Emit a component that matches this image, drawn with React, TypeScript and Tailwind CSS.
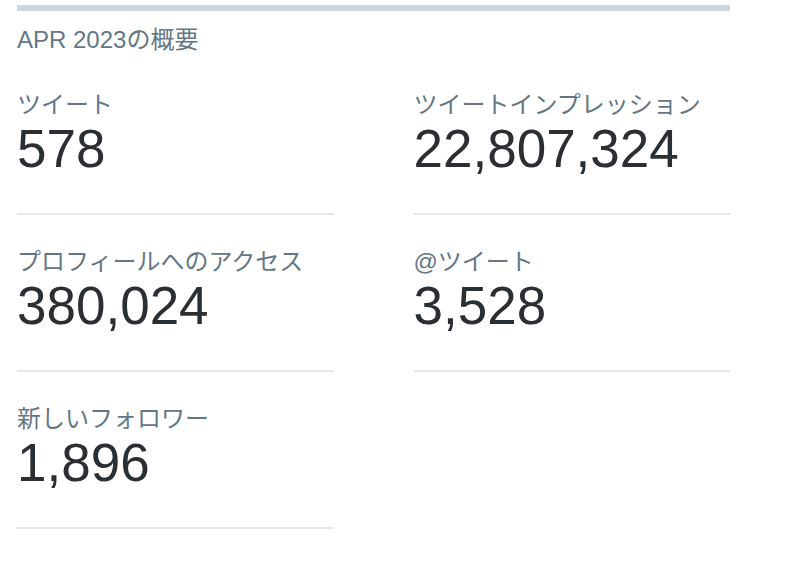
import React from "react";

const stats = [
  { label: "ツイート", value: "578" },
  { label: "ツイートインプレッション", value: "22,807,324" },
  { label: "プロフィールへのアクセス", value: "380,024" },
  { label: "@ツイート", value: "3,528" },
  { label: "新しいフォロワー", value: "1,896" },
];

const font = { fontFamily: '"Liberation Sans", "Noto Sans CJK JP", sans-serif' };

export default function App() {
  return (
    <div className="w-[788px] h-[570px] bg-white overflow-hidden" style={font}>
      <div className="ml-[17px] w-[713px] pt-[5px]">
        <div className="h-[6px] bg-[#ccd6dd]" />
        <div className="mt-[15px] mb-[4px] text-[24px] leading-[28px] text-[#657786]">APR 2023の概要</div>
        <div className="grid grid-cols-2 gap-x-[80px]">
          {stats.map((s) => (
            <div key={s.label} className="h-[157px] pt-[33px] border-b-2 border-[#e1e8ed]">
              <div className="text-[24px] leading-[28px] text-[#657786]">{s.label}</div>
              <div className="text-[53px] leading-[60px] text-[#292f33]">{s.value}</div>
            </div>
          ))}
        </div>
      </div>
    </div>
  );
}
